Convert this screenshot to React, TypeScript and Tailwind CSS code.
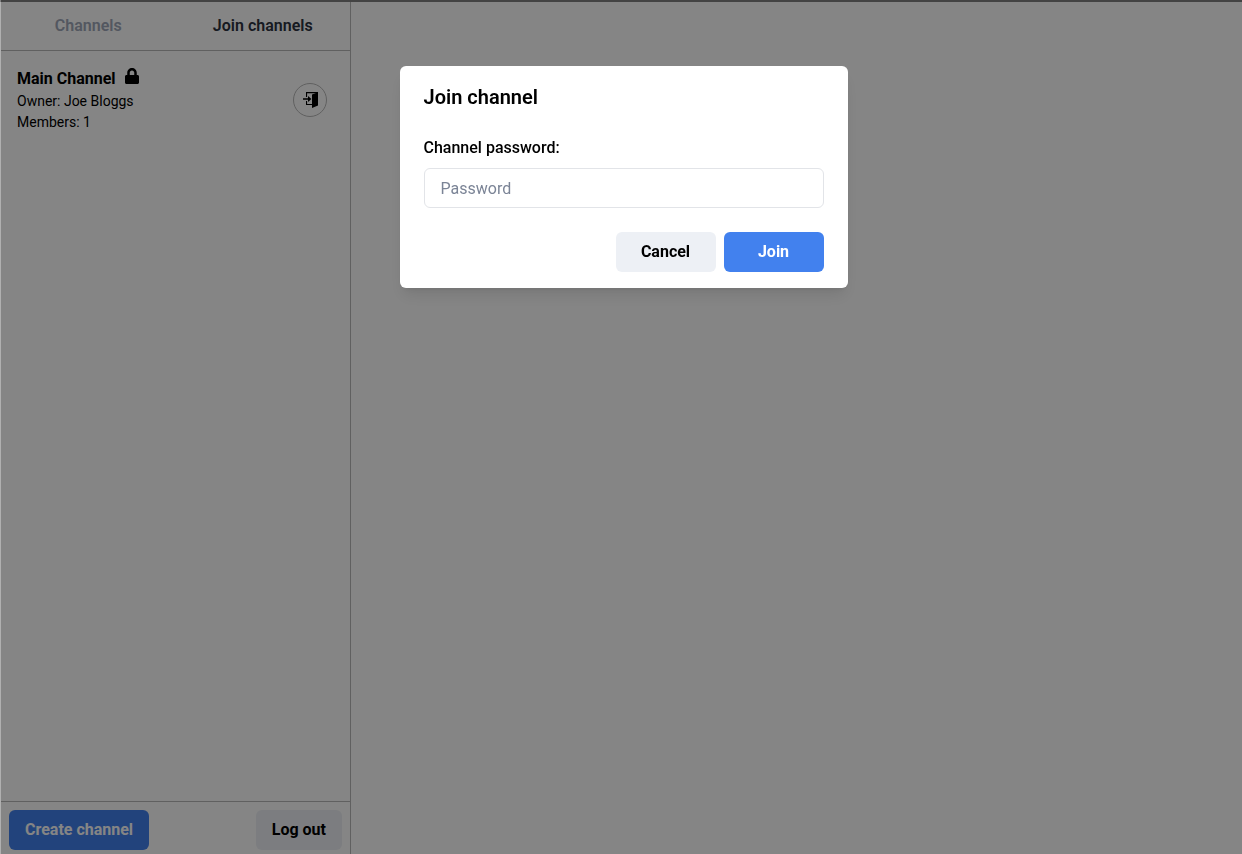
import type { ButtonHTMLAttributes } from "react";
import clsx from "clsx";
import { FaLock } from "react-icons/fa";

type ButtonProps = ButtonHTMLAttributes<HTMLButtonElement> & { primary?: boolean };

function Button({ primary, className, ...props }: ButtonProps) {
  return (
    <button
      type="button"
      className={clsx(
        "h-10 rounded-md px-4 text-base leading-5 font-bold",
        primary ? "bg-[#4281ee] text-white" : "bg-[#edf0f5] text-black",
        className,
      )}
      {...props}
    />
  );
}

function EnterDoorIcon() {
  return (
    <svg viewBox="0 0 16 16" className="size-4" fill="currentColor" aria-hidden="true">
      <path d="M4 0h12v1.2H5.1V5H4z" />
      <path d="M4 9h1.1v2.9H10V13H4z" />
      <path d="M1 6.2h5V4l3.4 3L6 10V7.8H1z" />
      <path d="M10 2.6 16 0.2v13.2l-6 2.6z" />
    </svg>
  );
}

function Sidebar() {
  return (
    <aside className="flex w-[351px] shrink-0 flex-col border-r border-l border-r-[#b8b8b8] border-l-[#b0b0b0]">
      <div role="tablist" className="grid h-[49px] grid-cols-2 border-b border-[#b8b8b8] font-semibold">
        <button type="button" role="tab" aria-selected="false" className="text-[#a0a8b8]">
          Channels
        </button>
        <button type="button" role="tab" aria-selected="true" className="text-[#2d3340]">
          Join channels
        </button>
      </div>
      <ul className="grow">
        <li className="flex items-center justify-between py-4 pr-[23px] pl-4">
          <div className="text-sm leading-[21px]">
            <h2 className="flex h-6 items-start gap-2 text-base leading-6 font-bold">
              Main Channel
              <FaLock className="mt-px size-4" aria-label="Password protected" />
            </h2>
            <p>Owner: Joe Bloggs</p>
            <p>Members: 1</p>
          </div>
          <button
            type="button"
            aria-label="Join Main Channel"
            className="flex size-[34px] items-center justify-center rounded-full border border-[#b8b8b8]"
          >
            <EnterDoorIcon />
          </button>
        </li>
      </ul>
      <footer className="flex justify-between border-t border-[#b8b8b8] px-2 pt-2 pb-1">
        <Button primary>Create channel</Button>
        <Button>Log out</Button>
      </footer>
    </aside>
  );
}

function JoinDialog() {
  return (
    <div className="fixed inset-y-0 right-0 left-px z-10 flex items-start justify-center bg-black/48 pt-[66px] pl-1">
      <form
        role="dialog"
        aria-modal="true"
        aria-labelledby="dialog-title"
        onSubmit={(event) => event.preventDefault()}
        className="w-full max-w-md rounded-md bg-white shadow-lg"
      >
        <h1 id="dialog-title" className="px-6 py-4 text-xl leading-[30px] font-semibold">
          Join channel
        </h1>
        <div className="px-6 py-2">
          <label htmlFor="channel-password" className="mb-2 block font-medium">
            Channel password:
          </label>
          <input
            id="channel-password"
            type="password"
            placeholder="Password"
            className="block h-10 w-full rounded-md border border-[#e2e4e8] bg-white px-4 placeholder:text-[#7b8496]"
          />
        </div>
        <div className="flex justify-end gap-2 px-6 py-4">
          <Button className="w-[100px]">Cancel</Button>
          <Button primary type="submit" className="w-[100px]">
            Join
          </Button>
        </div>
      </form>
    </div>
  );
}

export default function App() {
  return (
    <div className="flex min-h-screen border-t-2 border-[#808080] bg-white font-[Roboto,sans-serif] text-base text-black">
      <Sidebar />
      <main className="grow" />
      <JoinDialog />
    </div>
  );
}
